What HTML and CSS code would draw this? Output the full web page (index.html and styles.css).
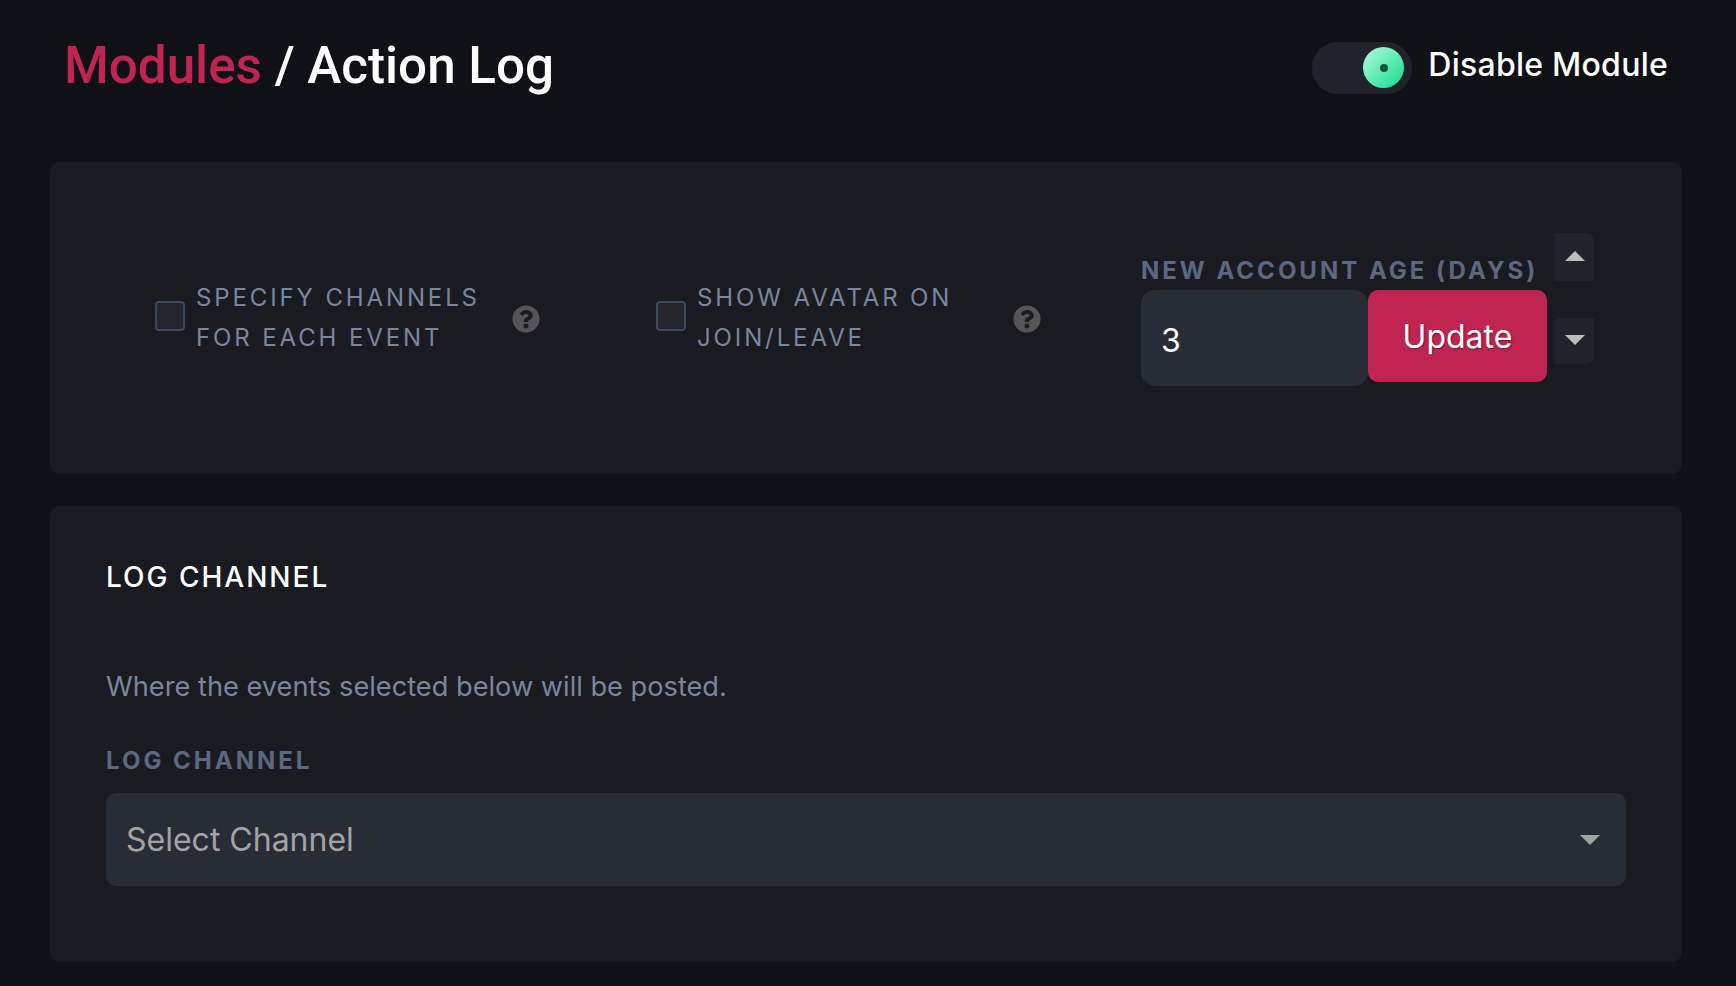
FILE: index.html
```html
<!DOCTYPE html>
<html lang="en">
<head>
    <meta charset="UTF-8">
    <meta name="viewport" content="width=device-width, initial-scale=1.0">
    <title>Action Log</title>
    <link rel="stylesheet" href="styles.css">
</head>
<body>
    <div class="page">
        <header class="header">
            <h1 class="title"><span class="title-link">Modules</span> / Action Log</h1>
            <div class="module-toggle">
                <div class="toggle"><span class="knob"><span class="knob-dot"></span></span></div>
                <span class="toggle-label">Disable Module</span>
            </div>
        </header>

        <section class="card options">
            <div class="option option-first">
                <input type="checkbox" class="checkbox" id="specify">
                <label for="specify" class="option-label">Specify channels<br>for each event</label>
                <svg class="help" viewBox="0 0 512 512"><path d="M504 256c0 136.997-111.043 248-248 248S8 392.997 8 256C8 119.083 119.043 8 256 8s248 111.083 248 248zM262.655 90c-54.497 0-89.255 22.957-116.549 63.758-3.536 5.286-2.353 12.415 2.715 16.258l34.699 26.31c5.205 3.947 12.621 3.008 16.665-2.122 17.864-22.658 30.113-35.797 57.303-35.797 20.429 0 45.698 13.148 45.698 32.958 0 14.976-12.363 22.667-32.534 33.976C247.128 238.528 216 254.941 216 296v4c0 6.627 5.373 12 12 12h56c6.627 0 12-5.373 12-12v-1.333c0-28.462 83.186-29.647 83.186-106.667 0-58.002-60.165-102-116.531-102zM256 338c-25.365 0-46 20.635-46 46 0 25.364 20.635 46 46 46s46-20.636 46-46c0-25.365-20.635-46-46-46z"/></svg>
            </div>
            <div class="option option-second">
                <input type="checkbox" class="checkbox" id="avatar">
                <label for="avatar" class="option-label">Show avatar on<br>join/leave</label>
                <svg class="help" viewBox="0 0 512 512"><path d="M504 256c0 136.997-111.043 248-248 248S8 392.997 8 256C8 119.083 119.043 8 256 8s248 111.083 248 248zM262.655 90c-54.497 0-89.255 22.957-116.549 63.758-3.536 5.286-2.353 12.415 2.715 16.258l34.699 26.31c5.205 3.947 12.621 3.008 16.665-2.122 17.864-22.658 30.113-35.797 57.303-35.797 20.429 0 45.698 13.148 45.698 32.958 0 14.976-12.363 22.667-32.534 33.976C247.128 238.528 216 254.941 216 296v4c0 6.627 5.373 12 12 12h56c6.627 0 12-5.373 12-12v-1.333c0-28.462 83.186-29.647 83.186-106.667 0-58.002-60.165-102-116.531-102zM256 338c-25.365 0-46 20.635-46 46 0 25.364 20.635 46 46 46s46-20.636 46-46c0-25.365-20.635-46-46-46z"/></svg>
            </div>
            <div class="age">
                <div class="age-main">
                    <label for="age" class="field-label age-label">New account age (days)</label>
                    <div class="age-row">
                        <input id="age" class="age-input" type="text" value="3">
                        <button class="update" type="button">Update</button>
                    </div>
                </div>
                <div class="spin">
                    <div class="spin-btn spin-up"><svg width="20" height="10" viewBox="0 0 20 10"><path d="M10 0 20 10H0z"/></svg></div>
                    <div class="spin-btn spin-down"><svg width="20" height="10" viewBox="0 0 20 10"><path d="M0 0H20L10 10z"/></svg></div>
                </div>
            </div>
        </section>

        <section class="card channel">
            <h2 class="card-title">Log Channel</h2>
            <p class="card-text">Where the events selected below will be posted.</p>
            <label class="field-label channel-label" for="channel">Log Channel</label>
            <div class="select">
                <span id="channel" class="select-value">Select Channel</span>
                <svg width="20" height="10" viewBox="0 0 20 10"><path d="M0 0H20L10 10z"/></svg>
            </div>
        </section>
    </div>
</body>
</html>
```

FILE: styles.css
```css
*{
    box-sizing: border-box;
}
html{
    background-color: #0f1116;
}
body{
    margin: 0;
    font-family: Inter, "Liberation Sans", sans-serif;
    color: white;
}
.page{
    padding: 0 54px 0 50px;
}
.header{
    display: flex;
    justify-content: space-between;
    align-items: center;
    height: 130px;
    padding: 0 14px;
}
.title{
    margin: 2px 0 0;
    font-family: Roboto, sans-serif;
    font-size: 51.2px;
    font-weight: 500;
    line-height: 56px;
}
.title-link{
    color: #c02552;
}
.module-toggle{
    display: flex;
    align-items: center;
    gap: 16px;
}
.toggle{
    display: flex;
    justify-content: flex-end;
    align-items: center;
    width: 100px;
    height: 52px;
    margin-top: 5px;
    padding-right: 8px;
    border-radius: 26px;
    background-color: #20232a;
}
.knob{
    display: flex;
    justify-content: center;
    align-items: center;
    width: 41px;
    height: 41px;
    border-radius: 50%;
    background: linear-gradient(135deg, #b4fbdc, #11dd8c);
}
.knob-dot{
    width: 8px;
    height: 8px;
    border-radius: 50%;
    background-color: #14573f;
}
.toggle-label{
    margin-bottom: 2px;
    font-size: 32px;
    font-weight: 500;
    letter-spacing: 0.25px;
}
.card{
    border-radius: 10px;
    background-color: #191b20;
}
.options{
    display: flex;
    align-items: center;
    height: 312px;
    margin-top: 32px;
    padding-top: 2px;
}
.option{
    display: flex;
    align-items: center;
}
.option-first{
    width: 606px;
    padding-left: 105px;
}
.option-second{
    width: 485px;
}
.checkbox{
    appearance: none;
    width: 30px;
    height: 30px;
    margin: -6px 11px 0 0;
    border: 2px solid #3a4860;
    border-radius: 4px;
    background-color: #24262c;
}
.option-label{
    width: 316px;
    margin-bottom: 2px;
    font-size: 24px;
    line-height: 40px;
    letter-spacing: 0.12em;
    text-transform: uppercase;
    color: #7a869f;
}
.help{
    width: 28px;
    height: 28px;
    fill: #555;
}
.field-label{
    display: block;
    font-size: 24px;
    font-weight: 700;
    letter-spacing: 3px;
    text-transform: uppercase;
    color: #5c6780;
}
.age{
    display: flex;
    gap: 8px;
    margin-top: -18px;
}
.age-main{
    padding-top: 22px;
}
.age-label{
    line-height: 30px;
    margin-bottom: 4px;
}
.age-row{
    display: flex;
    align-items: flex-start;
}
.age-input{
    width: 227px;
    height: 96px;
    padding: 4px 20px 0;
    border: none;
    border-radius: 14px;
    background-color: #282c35;
    color: white;
    font-family: inherit;
    font-size: 32px;
}
.update{
    width: 179px;
    height: 92px;
    border: none;
    border-radius: 10px;
    background-color: #c02552;
    color: white;
    font-family: inherit;
    font-size: 32px;
    text-shadow: 1px 1px 2px rgba(0, 0, 0, 0.4);
}
.spin{
    display: flex;
    flex-direction: column;
    justify-content: space-between;
    height: 131px;
    margin-top: -1px;
}
.spin-btn{
    display: flex;
    justify-content: center;
    align-items: center;
    width: 39px;
    background-color: #20232a;
}
.spin-btn svg{
    fill: #bcbcbc;
}
.spin-up{
    height: 48px;
    padding-bottom: 3px;
    border-radius: 0 8px 0 0;
}
.spin-down{
    height: 46px;
    padding-bottom: 2px;
    border-radius: 0 0 8px 0;
}
.channel{
    height: 456px;
    margin-top: 32px;
    padding: 53px 56px 0;
}
.card-title{
    margin: 0;
    font-size: 28px;
    line-height: 36px;
    font-weight: 500;
    letter-spacing: 2px;
    text-transform: uppercase;
}
.card-text{
    margin: 74px 0 0;
    font-size: 27.2px;
    line-height: 36px;
    color: #7a869f;
}
.channel-label{
    margin-top: 40px;
    line-height: 32px;
}
.select{
    display: flex;
    justify-content: space-between;
    align-items: center;
    height: 93px;
    margin-top: 16px;
    padding: 0 26px 0 20px;
    border-radius: 10px;
    background-color: #282c35;
}
.select-value{
    font-size: 32px;
    color: #a3a3a3;
}
.select svg{
    fill: #a3a3a3;
}
```
